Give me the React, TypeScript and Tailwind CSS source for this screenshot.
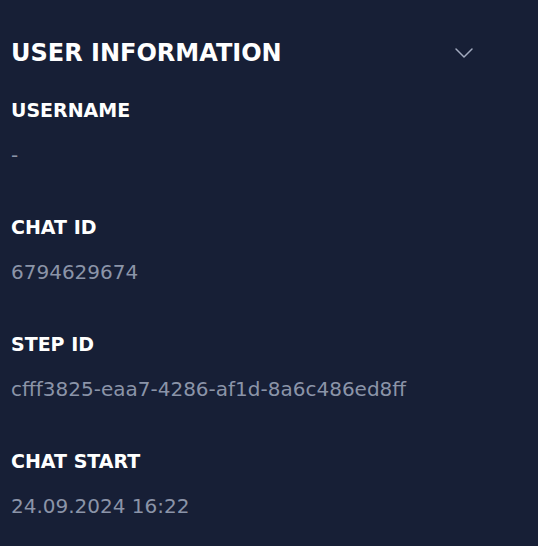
import { ChevronDown } from "lucide-react";

const rows = [
  { label: "USERNAME", value: "-" },
  { label: "CHAT ID", value: "6794629674" },
  { label: "STEP ID", value: "cfff3825-eaa7-4286-af1d-8a6c486ed8ff" },
  { label: "CHAT START", value: "24.09.2024 16:22" },
];

export default function App() {
  return (
    <div
      className="min-h-screen w-full bg-[#171f36] px-[11px] pt-[36px]"
      style={{ fontFamily: '"DejaVu Sans", sans-serif' }}
    >
      <div className="flex h-[34px] w-[469px] items-center justify-between">
        <h2 className="text-[24px] font-semibold leading-none text-white">USER INFORMATION</h2>
        <ChevronDown className="h-[32px] w-[32px] text-[#a3abbf]" strokeWidth={1.1} />
      </div>
      <div className="mt-[29px] flex flex-col gap-[50px]">
        {rows.map((r) => (
          <div key={r.label} className="flex flex-col gap-[23px]">
            <div className="text-[19px] font-bold leading-[22px] text-white">{r.label}</div>
            <div className="text-[20px] leading-[22px] text-[#8b94a8]">{r.value}</div>
          </div>
        ))}
      </div>
    </div>
  );
}
